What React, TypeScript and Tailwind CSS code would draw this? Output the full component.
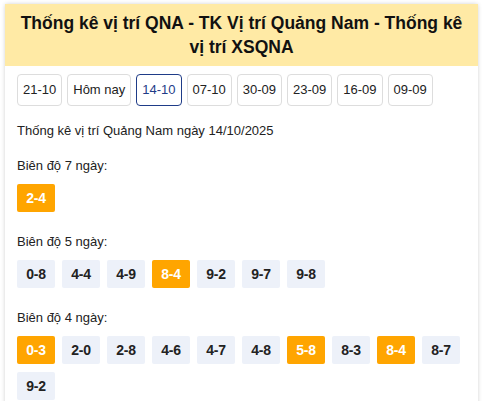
import React from "react";

const dates = ["21-10", "Hôm nay", "14-10", "07-10", "30-09", "23-09", "16-09", "09-09"];

type Chip = { v: string; hot?: boolean };

const groups: { label: string; chips: Chip[] }[] = [
  { label: "Biên độ 7 ngày:", chips: [{ v: "2-4", hot: true }] },
  {
    label: "Biên độ 5 ngày:",
    chips: [
      { v: "0-8" },
      { v: "4-4" },
      { v: "4-9" },
      { v: "8-4", hot: true },
      { v: "9-2" },
      { v: "9-7" },
      { v: "9-8" },
    ],
  },
  {
    label: "Biên độ 4 ngày:",
    chips: [
      { v: "0-3", hot: true },
      { v: "2-0" },
      { v: "2-8" },
      { v: "4-6" },
      { v: "4-7" },
      { v: "4-8" },
      { v: "5-8", hot: true },
      { v: "8-3" },
      { v: "8-4", hot: true },
      { v: "8-7" },
      { v: "9-2" },
    ],
  },
];

export default function App() {
  return (
    <div className="min-h-[401px] w-[484px] bg-white pt-[4px] pl-[5px] pr-[6px] font-['Liberation_Sans',Arial,sans-serif] text-[#222]">
      <div className="rounded-[2px] bg-white shadow-[0_0_4px_rgba(0,0,0,0.18)]">
        <h1 className="bg-[#ffeaa5] px-3 pt-[7px] pb-[7px] text-center text-[17.5px] font-bold leading-[24px] text-[#111]">
          Thống kê vị trí QNA - TK Vị trí Quảng Nam - Thống kê vị trí XSQNA
        </h1>
        <div className="px-3 pb-4">
          <div className="mt-2 flex gap-[5px]">
            {dates.map((d) => (
              <div
                key={d}
                className={
                  d === "14-10"
                    ? "flex h-[32px] items-center whitespace-nowrap rounded-[4px] border border-[#1f3c88] px-[5px] text-[13px] text-[#1f3c88]"
                    : "flex h-[32px] items-center whitespace-nowrap rounded-[4px] border border-[#dddddd] px-[5px] text-[13px] text-[#222]"
                }
              >
                {d}
              </div>
            ))}
          </div>
          <p className="mt-[16px] text-[13px] leading-[18px]">Thống kê vị trí Quảng Nam ngày 14/10/2025</p>
          {groups.map((g, gi) => (
            <div key={g.label} className={gi === 0 ? "mt-[17px]" : "mt-[21px]"}>
              <p className="text-[13px] leading-[18px]">{g.label}</p>
              <div className="mt-[9px] flex flex-wrap gap-x-[7px] gap-y-[8px]">
                {g.chips.map((c, i) => (
                  <div
                    key={i}
                    className={
                      c.hot
                        ? "flex h-[28px] w-[38px] items-center justify-center rounded-[2px] bg-[#ffa500] text-[14px] font-bold tracking-[-0.3px] text-white"
                        : "flex h-[28px] w-[38px] items-center justify-center rounded-[2px] bg-[#edf1f9] text-[14px] font-bold tracking-[-0.3px] text-[#222]"
                    }
                  >
                    {c.v}
                  </div>
                ))}
              </div>
            </div>
          ))}
        </div>
      </div>
    </div>
  );
}
